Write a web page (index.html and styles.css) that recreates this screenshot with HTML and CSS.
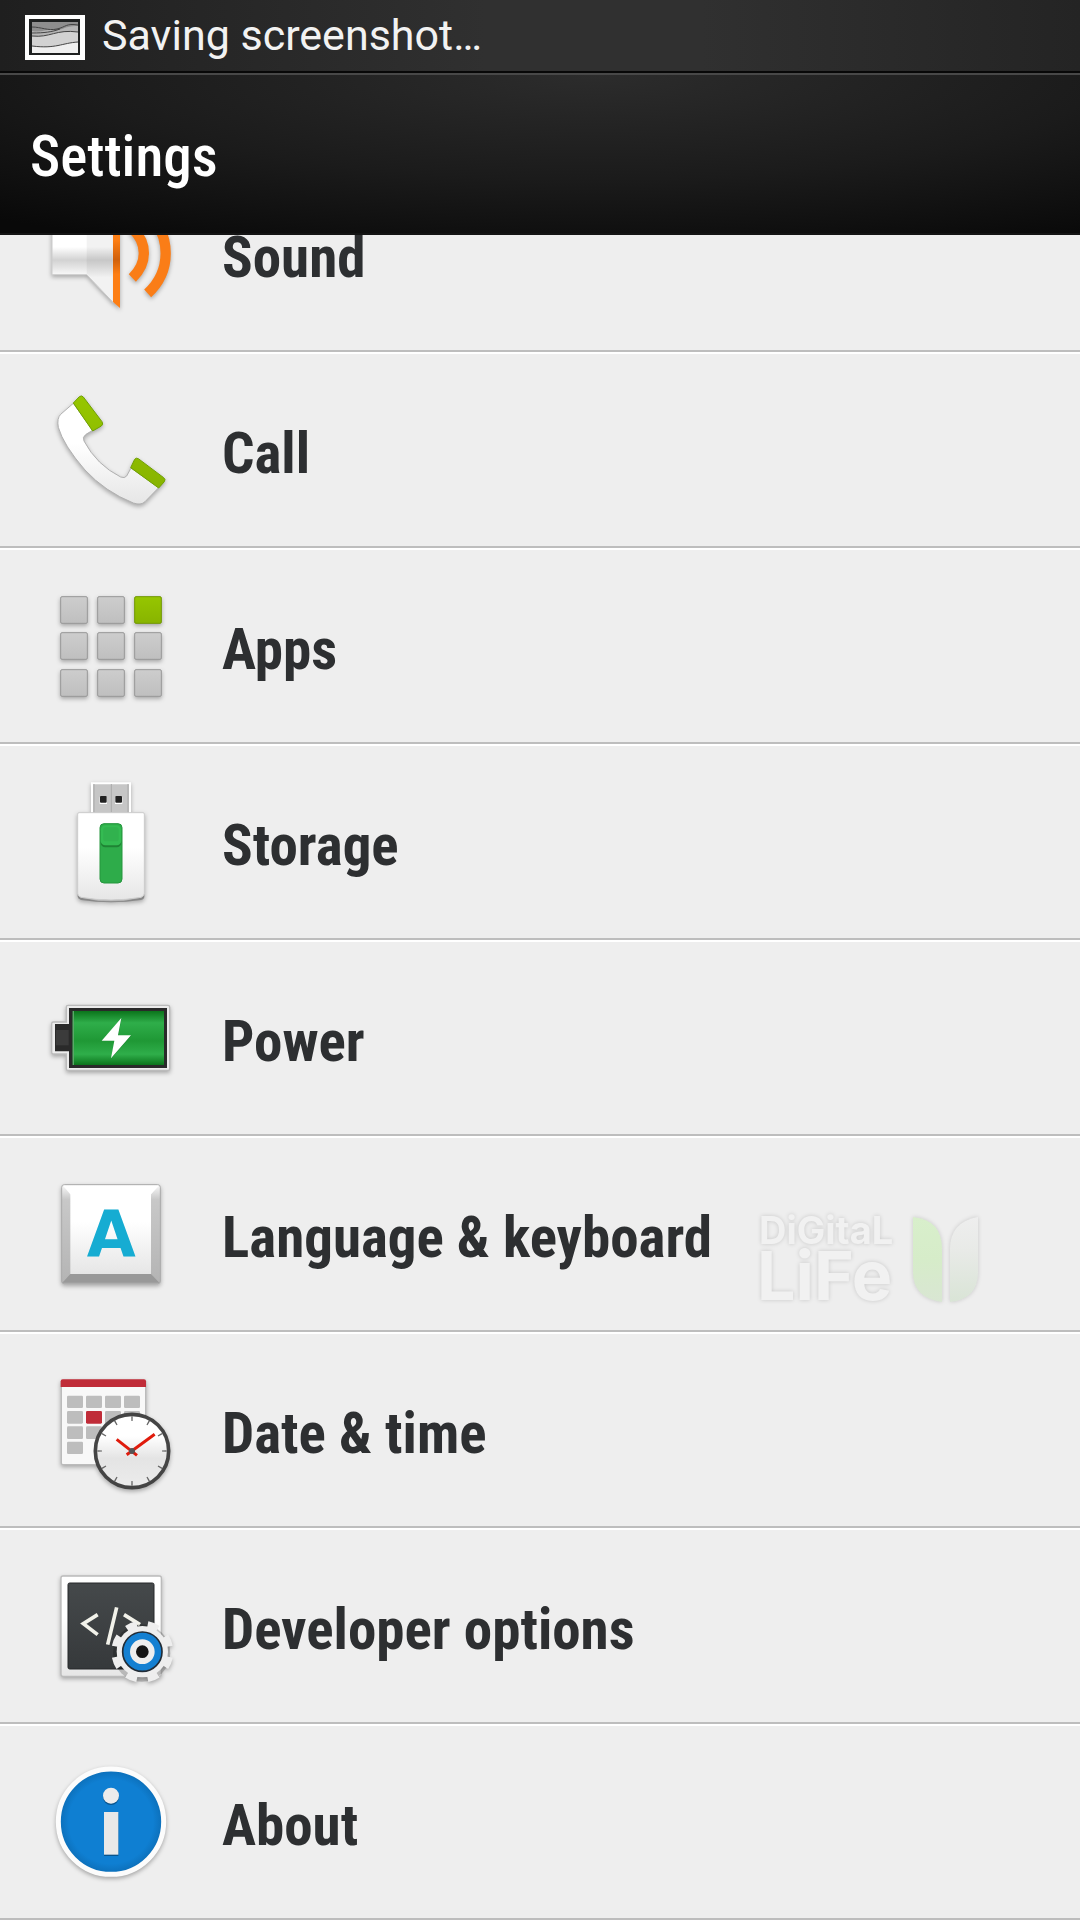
FILE: index.html
```html
<!DOCTYPE html>
<html lang="en">
<head>
    <meta charset="UTF-8">
    <title>Settings</title>
<link rel="stylesheet" href="styles.css">
</head>
<body>
    <div class="status-bar">
        <svg class="status-icon" viewBox="0 0 60 45" aria-hidden="true">
            <rect width="60" height="45" fill="#fff"/>
            <rect x="4" y="4" width="51" height="36" fill="#1e2020"/>
            <rect x="7" y="7" width="46" height="31" fill="#8e8e8e"/>
            <path d="M7 16c10 2 14-2 22-1s12-5 24-4v27H7z" fill="#b5b5b5"/>
            <path d="M7 21c14 2 20-6 46-4v21H7z" fill="#d2d2d2"/>
            <path d="M7 31c24 3 28-3 46-4v11H7z" fill="#efefef"/>
            <path d="M7 12c9 0 16 4 25 2s9-6 21-4M7 18c12 0 20-1 28-4M7 21c18 2 24-7 46-4M7 31c24 3 30-3 46-4" fill="none" stroke="#444"/>
        </svg>
        <span>Saving screenshot…</span>
    </div>
    <header class="header">
        <h1>Settings</h1>
    </header>

    <main class="list">
        <!-- shared gradients -->
        <svg class="defs" aria-hidden="true">
            <defs>
                <linearGradient id="white" x2="0" y2="1"><stop offset=".4" stop-color="#fff"/><stop offset="1" stop-color="#e6e6e6"/></linearGradient>
                <linearGradient id="horn" x2="0" y2="1"><stop offset=".45" stop-color="#fff"/><stop offset=".58" stop-color="#d2d2d2"/><stop offset=".75" stop-color="#fff"/></linearGradient>
                <linearGradient id="orange" x2="0" y2="1"><stop offset=".4" stop-color="#fd7e14"/><stop offset=".57" stop-color="#d0610c"/><stop offset=".7" stop-color="#fd7e14"/></linearGradient>
                <linearGradient id="gray" x2="0" y2="1"><stop stop-color="#cdcdcd"/><stop offset="1" stop-color="#bfbfbf"/></linearGradient>
                <linearGradient id="lime" x2="0" y2="1"><stop stop-color="#96c600"/><stop offset="1" stop-color="#88b400"/></linearGradient>
                <linearGradient id="cell" x2="0" y2="1"><stop stop-color="#0b741b"/><stop offset=".22" stop-color="#2fae4a"/><stop offset=".55" stop-color="#1f9835"/><stop offset=".8" stop-color="#2fae4a"/><stop offset="1" stop-color="#0b741b"/></linearGradient>
                <linearGradient id="screen" x2="0" y2="1"><stop stop-color="#45494b"/><stop offset="1" stop-color="#36393b"/></linearGradient>
                <radialGradient id="blue"><stop offset=".8" stop-color="#0f7fd2"/><stop offset="1" stop-color="#0c6db6"/></radialGradient>
                <linearGradient id="dial" x2="0" y2="1"><stop offset=".3" stop-color="#fff"/><stop offset=".6" stop-color="#e4e4e4"/><stop offset="1" stop-color="#ececec"/></linearGradient>
                <linearGradient id="bevel" x2="0" y2="1"><stop stop-color="#fafafa"/><stop offset=".15" stop-color="#c8c8c8"/><stop offset="1" stop-color="#b4b4b4"/></linearGradient>
                <linearGradient id="leaf" x2="0" y2="1"><stop stop-color="#d8efcb"/><stop offset=".5" stop-color="#d6ecc9"/><stop offset="1" stop-color="#d9e6d3"/></linearGradient>
                <linearGradient id="leaf-light" x2="0" y2="1"><stop stop-color="#eee"/><stop offset=".4" stop-color="#e8eae7"/><stop offset="1" stop-color="#d9e4d6"/></linearGradient>
            </defs>
        </svg>

        <ul>
            <li><a href="#sound">
                <svg class="icon" viewBox="33 -138 420 420" aria-hidden="true">
                    <path d="M66-6h104l80-80v304l-80-84H66z" fill="url(#horn)" stroke="#ccc" stroke-width="3"/>
                    <path d="M170-6l78-80v302l-78-84z" fill="#000" opacity=".05"/>
                    <path d="M249-86l21-18v338l-21-18z" fill="url(#orange)"/>
                    <path d="M307-4c46 42 46 104 0 148M353-52c72 68 72 176 0 242" fill="none" stroke="#fa7d17" stroke-width="31"/>
                </svg>
                <span>Sound</span>
            </a></li>
            <li><a href="#call">
                <svg class="icon" viewBox="33 30 420 420" aria-hidden="true">
                    <path d="M130 100L92 133Q80 145 85 172Q100 225 165 300Q225 365 310 399Q333 407 345 395L386 353L303 294L290 318Q284 326 272 321Q200 285 162 213Q156 201 168 193L188 181z" fill="url(#white)" stroke="#b0b0b0" stroke-width="3"/>
                    <path d="M130 99l18-19q7-5 12 1l56 74q5 8-2 13l-26 15zM302 293l12-25q4-6 11-2l76 57q7 5 2 12l-17 19z" fill="url(#lime)" stroke="#6fa000" stroke-width="3"/>
                </svg>
                <span>Call</span>
            </a></li>
            <li><a href="#apps">
                <svg class="icon" viewBox="3 -12 420 420" aria-hidden="true">
                    <g fill="url(#gray)" stroke="#989898" stroke-width="3">
                        <rect x="62" y="50" width="80" height="80" rx="4"/>
                        <rect x="173" y="50" width="80" height="80" rx="4"/>
                        <rect x="284" y="50" width="80" height="80" rx="4" fill="url(#lime)" stroke="#719800"/>
                        <rect x="62" y="158" width="80" height="80" rx="4"/>
                        <rect x="173" y="158" width="80" height="80" rx="4"/>
                        <rect x="284" y="158" width="80" height="80" rx="4"/>
                        <rect x="62" y="269" width="80" height="80" rx="4"/>
                        <rect x="173" y="269" width="80" height="80" rx="4"/>
                        <rect x="284" y="269" width="80" height="80" rx="4"/>
                    </g>
                </svg>
                <span>Apps</span>
            </a></li>
            <li><a href="#storage">
                <svg class="icon" viewBox="3 6 420 420" aria-hidden="true">
                    <path d="M156 130V40h114v90" fill="#c6c6c6" stroke="#fff" stroke-width="6"/>
                    <path d="M162 42v86M214 42v86M264 42v86" stroke="#aaa" stroke-width="3"/>
                    <path d="M179 82h22v20h-22zM225 82h22v20h-22z" fill="#fff"/>
                    <rect x="180" y="78" width="20" height="20" rx="3" fill="#222"/>
                    <rect x="226" y="78" width="20" height="20" rx="3" fill="#222"/>
                    <path d="M113 370q0 8 10 13q90 22 180 0q10-5 10-13v10q0 7-10 10q-90 14-180 0q-10-4-10-10z" fill="#888"/>
                    <path d="M113 132q0-4 4-4h192q4 0 4 4v238q0 8-10 12q-90 16-180 0q-10-4-10-12z" fill="url(#white)" stroke="#ccc" stroke-width="3"/>
                    <rect x="180" y="161" width="66" height="178" rx="12" fill="#2eac4a" stroke="#24963d" stroke-width="3"/>
                    <rect x="182" y="170" width="62" height="62" rx="14" fill="#1f8334"/>
                    <rect x="182" y="166" width="62" height="60" rx="14" fill="#34bb52"/>
                    <rect x="190" y="172" width="46" height="42" rx="8" fill="#31b24e"/>
                </svg>
                <span>Storage</span>
            </a></li>
            <li><a href="#power">
                <svg class="icon" viewBox="3 -36 420 420" aria-hidden="true">
                    <path d="M84 76h300q5 0 5 5v185q0 5-5 5H84q-5 0-5-5v-44H40q-5 0-5-5v-86q0-5 5-5h39V81q0-5 5-5z" fill="#ececec" stroke="#bbb" stroke-width="4"/>
                    <path d="M87 84h294v180H87v-50H45v-82h42z" fill="#2a2a2a"/>
                    <path d="M48 150h38v46H48z" fill="#3b3b3b"/>
                    <rect x="98" y="93" width="274" height="162" fill="url(#cell)"/>
                    <path d="M100 93v162" stroke="#5aa868" stroke-width="4"/>
                    <path d="M244 117l-58 65h38l-10 53 60-68h-39z" fill="#16802a"/>
                    <path d="M244 114l-59 68h38l-10 53 60-69h-39z" fill="#fff"/>
                </svg>
                <span>Power</span>
            </a></li>
            <li><a href="#language">
                <svg class="icon" viewBox="3 -18 420 420" aria-hidden="true">
                    <rect x="65" y="44" width="296" height="297" rx="8" fill="url(#bevel)" stroke="#aaa" stroke-width="3"/>
                    <path d="M69 47h288l-24 26H91z" fill="#fff"/>
                    <path d="M67 338l24-26h242l25 26z" fill="#999"/>
                    <path d="M91 72q-2-10-18-22h280q-15 12-20 22v240H91z" fill="url(#white)"/>
                    <text class="key" x="214" y="260" text-anchor="middle">A</text>
                </svg>
                <span>Language &amp; keyboard</span>
            </a></li>
            <li><a href="#date">
                <svg class="icon" viewBox="3 0 420 420" aria-hidden="true">
                    <rect x="64" y="62" width="253" height="252" rx="5" fill="#f8f8f8" stroke="#bbb" stroke-width="4"/>
                    <path d="M62 81V64q0-6 6-6h244q6 0 6 6v17z" fill="#c02c38"/>
                    <g fill="#bdbdbd">
                        <rect x="81" y="107" width="48" height="37" rx="4"/>
                        <rect x="138" y="107" width="48" height="37" rx="4"/>
                        <rect x="195" y="107" width="48" height="37" rx="4"/>
                        <rect x="252" y="107" width="48" height="37" rx="4"/>
                        <rect x="81" y="153" width="48" height="38" rx="4"/>
                        <rect x="138" y="153" width="48" height="38" rx="4" fill="#c02c38"/>
                        <rect x="195" y="153" width="48" height="38" rx="4"/>
                        <rect x="252" y="153" width="48" height="38" rx="4"/>
                        <rect x="81" y="199" width="48" height="38" rx="4"/>
                        <rect x="138" y="199" width="48" height="38" rx="4"/>
                        <rect x="81" y="245" width="48" height="37" rx="4"/>
                    </g>
                    <circle cx="276" cy="273" r="110" fill="url(#dial)" stroke="#444" stroke-width="11"/>
                    <circle cx="276" cy="273" r="97" fill="none" stroke="#666" stroke-width="14" pathLength="120" stroke-dasharray=".8 9.2" stroke-dashoffset=".4"/>
                    <path d="M230 238l61 48M344 223l-84 61" stroke="#e01b0c" stroke-width="9"/>
                    <circle cx="276" cy="273" r="9" fill="#555"/>
                </svg>
                <span>Date &amp; time</span>
            </a></li>
            <li><a href="#developer">
                <svg class="icon" viewBox="3 -12 420 420" aria-hidden="true">
                    <rect x="63" y="48" width="301" height="301" rx="6" fill="url(#white)" stroke="#bbb" stroke-width="4"/>
                    <rect x="84" y="69" width="258" height="258" rx="5" fill="url(#screen)" stroke="#26282a" stroke-width="3"/>
                    <path d="M173 164l-43 27 43 33M252 164l48 30M230 142l-27 112" fill="none" stroke="#f2f2ea" stroke-width="11"/>
                    <circle cx="305" cy="279" r="86" fill="#000" opacity=".2"/>
                    <circle cx="307" cy="275" r="82" fill="none" stroke="#eee" stroke-width="22" pathLength="80" stroke-dasharray="5 5" stroke-dashoffset="-2.5"/>
                    <circle cx="307" cy="275" r="77" fill="#eee"/>
                    <circle cx="307" cy="275" r="59" fill="#1480d2" stroke="#222c36" stroke-width="5"/>
                    <circle cx="307" cy="275" r="28" fill="#151515" stroke="#eee" stroke-width="18"/>
                </svg>
                <span>Developer options</span>
            </a></li>
            <li><a href="#about">
                <svg class="icon" viewBox="3 6 420 420" aria-hidden="true">
                    <circle cx="213" cy="215" r="158" fill="url(#blue)" stroke="#fcfcfc" stroke-width="15"/>
                    <circle cx="213" cy="141" r="24" fill="#08548d"/>
                    <path d="M192 190h43v128h-43z" fill="#08548d"/>
                    <circle cx="213" cy="137" r="24" fill="#ececec"/>
                    <path d="M192 186h43v128h-43z" fill="#e8e8e8"/>
                </svg>
                <span>About</span>
            </a></li>
        </ul>

        <svg class="watermark" viewBox="0 0 220 88" role="img" aria-label="Digital Life">
            <text class="wm-small" x="-2" y="28">DiGitaL</text>
            <text class="wm-big" x="-4" y="84">LiFe</text>
            <path d="M152 1q29 3 29 32v53q-29-4-29-30z" fill="url(#leaf)"/>
            <path d="M217 1q-28 5-28 32v53q28-3 28-30z" fill="url(#leaf-light)"/>
        </svg>
    </main>
</body>
</html>
```
FILE: styles.css
```css
html,body {
    height: 100%;
    margin: 0;
    font-family: "Roboto Condensed", Roboto, sans-serif;
}
body {
    display: flex;
    flex-direction: column;
    overflow: hidden;
    background: #eee;
}
.status-bar {
    display: flex;
    align-items: center;
    gap: 17px;
    flex: none;
    height: 71px;
    padding: 0 25px;
    border-bottom: 2px solid #080808;
    background: linear-gradient(to right, #1f1f1f, #303030 45%, #303030 65%, #242424);
    color: #f2f2f2;
    font-family: Roboto, sans-serif;
    font-size: 43px;
}
.status-bar span {
    padding-bottom: 2px;
}
.status-icon {
    width: 60px;
    height: 45px;
    padding-top: 4px;
}
.header {
    display: flex;
    align-items: center;
    flex: none;
    box-sizing: border-box;
    height: 162px;
    padding: 4px 30px 0;
    border-top: 2px solid #484848;
    border-bottom: 2px solid #141414;
    background: radial-gradient(ellipse 85% 120% at 55% 0, #2c2c2c, #1b1b1b 55%, #090909);
    color: #fff;
}
.header h1 {
    margin: 0;
    font-size: 57px;
    font-weight: 500;
}

/* rows stick to the bottom, the first one slides under the header */
.list {
    position: relative;
    display: flex;
    flex-direction: column;
    justify-content: flex-end;
    flex: 1;
    min-height: 0;
    overflow: hidden;
}
.list ul {
    flex: none;
    margin: 0;
    padding: 0;
    list-style: none;
}
.list a {
    display: flex;
    align-items: center;
    gap: 41px;
    box-sizing: border-box;
    height: 196px;
    padding: 0 41px;
    border-top: 2px solid #fff;
    border-bottom: 2px solid #bdbdbd;
    color: #2d2f31;
    font-size: 57px;
    font-weight: 700;
    text-decoration: none;
}
.list a span {
    padding-top: 6px;
}
.icon {
    flex: none;
    width: 140px;
    height: 140px;
    filter: drop-shadow(0 2px 2px rgba(0, 0, 0, .3));
}
.key {
    fill: #16acd2;
    font: bold 190px "DejaVu Sans", sans-serif;
}
.defs {
    position: absolute;
    width: 0;
    height: 0;
}

.watermark {
    position: absolute;
    right: 99px;
    bottom: 616px;
    width: 220px;
    height: 88px;
    overflow: visible;
    filter: drop-shadow(0 0 2px rgba(0, 0, 0, .16));
    pointer-events: none;
}
.watermark text {
    fill: #f1f1f1;
    font-family: Inter, sans-serif;
    font-weight: 700;
}
.wm-small {
    font-size: 38px;
}
.wm-big {
    font-size: 68px;
}
```
